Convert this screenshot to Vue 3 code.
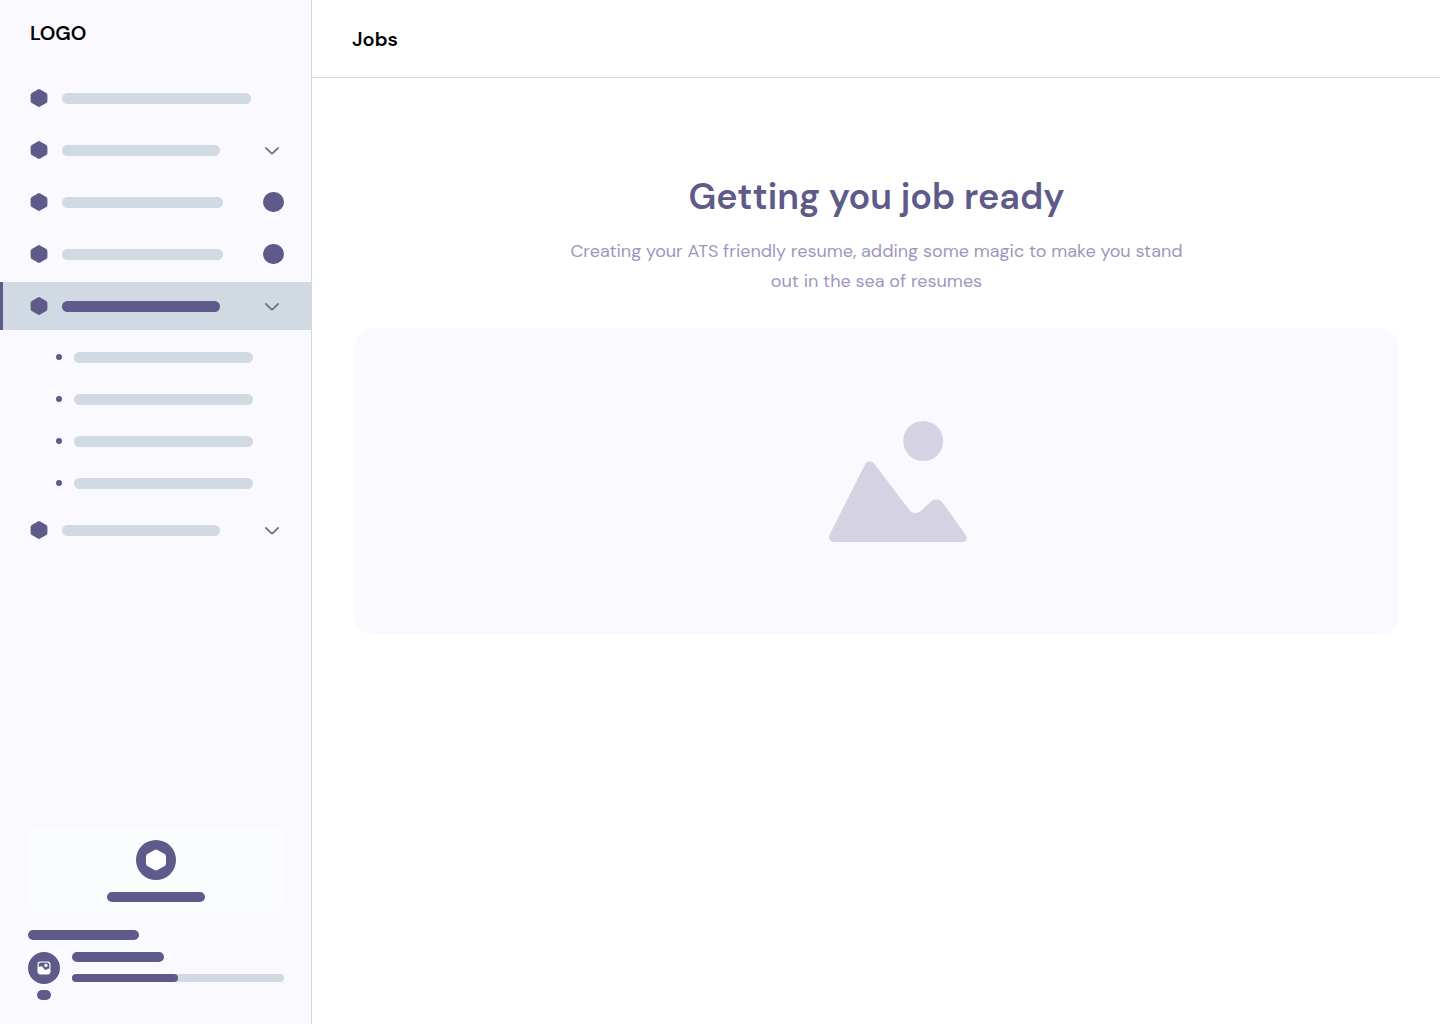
<script setup>
const menu = [
  { id: 1, bar: 'long' },
  { id: 2, bar: 'short', chevron: true },
  { id: 3, bar: 'medium', badge: true },
  { id: 4, bar: 'medium', badge: true },
  { id: 5, bar: 'short', chevron: true, active: true, children: [1, 2, 3, 4] },
  { id: 6, bar: 'short', chevron: true },
]
</script>

<template>
  <div class="app">
    <aside class="sidebar">
      <div class="logo">LOGO</div>

      <nav class="menu" aria-label="Main">
        <template v-for="item in menu" :key="item.id">
          <a
            href="#"
            class="item"
            :class="{ active: item.active }"
            :aria-label="`Menu item ${item.id}`"
          >
            <svg class="hexagon" viewBox="0 0 18 18" aria-hidden="true">
              <path d="M7.800 .4Q9-.3 10.200 .4L16.200 3.900Q17.400 4.600 17.400 6V12Q17.400 13.400 16.200 14.100L10.200 17.600Q9 18.300 7.800 17.600L1.800 14.100Q.6 13.400 .6 12V6Q.6 4.600 1.800 3.900Z" />
            </svg>
            <span class="bar" :class="item.bar"></span>
            <svg v-if="item.chevron" class="chevron" viewBox="0 0 24 24" aria-hidden="true">
              <path d="M5.800 9.800L11.300 15.200Q12 15.900 12.700 15.200L18.200 9.800" />
            </svg>
            <span v-if="item.badge" class="badge"></span>
          </a>
          <div v-if="item.children" class="submenu">
            <a
              v-for="child in item.children"
              :key="child"
              href="#"
              class="subitem"
              :aria-label="`Submenu item ${child}`"
            >
              <span class="dot"></span>
              <span class="bar sub"></span>
            </a>
          </div>
        </template>
      </nav>

      <footer class="foot">
        <button type="button" class="card" aria-label="Action">
          <span class="disc">
            <svg viewBox="0 0 20 22" width="20" height="22" aria-hidden="true">
              <path fill="#fff" d="M8.600 .9Q10 0 11.400 .9L18.600 5Q20 5.800 20 7.400V14.600Q20 16.200 18.600 17L11.400 21.100Q10 22 8.600 21.100L1.400 17Q0 16.200 0 14.600V7.400Q0 5.800 1.400 5Z" />
            </svg>
          </span>
          <span class="line card-line"></span>
        </button>
        <span class="line section-line"></span>
        <div class="profile">
          <div class="avatar-col">
            <span class="avatar">
              <svg viewBox="0 0 14 14" width="14" height="14" aria-hidden="true">
                <rect x=".5" y=".5" width="13" height="13" rx="3" fill="#fff" />
                <path fill="#5e5a89" d="M1.600 4.400Q1.600 1.600 4.400 1.600H9.600Q12.400 1.600 12.400 4.400V7.900L11.200 7.500Q9.500 9.200 8 8.900L5.600 5.900Q4.500 4.800 3.300 5.400L1.600 5.800Z" />
                <circle cx="8.900" cy="4.400" r="1.700" fill="#fff" />
              </svg>
            </span>
            <span class="line chip"></span>
          </div>
          <div class="details">
            <span class="line name-line"></span>
            <progress value="50" max="100" aria-label="Progress"></progress>
          </div>
        </div>
      </footer>
    </aside>

    <main class="main">
      <header class="topbar">
        <h1>Jobs</h1>
      </header>
      <section class="content">
        <h2>Getting you job ready</h2>
        <p>
          Creating your ATS friendly resume, adding some magic to make you stand
          <br />out in the sea of resumes
        </p>
        <div class="panel">
          <svg viewBox="0 0 182 123" width="182" height="123" aria-hidden="true">
            <circle cx="137.200" cy="21" r="20" />
            <path d="M43.700 114.500L78.500 45.500C81 40.300 85.300 40 88.500 44L121.500 87.500C126 94.500 131.500 94.500 136.500 89.500L145 81.500C149 78 153 78.500 156.500 82.500L180 115.500C182 119 180 122 176 122H48.500C44 122 41.800 118.500 43.700 114.500Z" />
          </svg>
        </div>
      </section>
    </main>
  </div>
</template>

<style>
body {
  margin: 0;
}
</style>

<style scoped>
.app {
  display: flex;
  min-height: 100vh;
  font-family: "DM Sans", Inter, sans-serif;
  background: #fff;
}

.sidebar {
  flex: 0 0 312px;
  box-sizing: border-box;
  display: flex;
  flex-direction: column;
  background: #faf9ff;
  border-right: 1px solid #d1d9e2;
}

.logo {
  padding: 20px 30px;
  height: 26px;
  margin-bottom: 8px;
  font-size: 20px;
  line-height: 26px;
  font-weight: 600;
  color: #000;
}

.menu {
  display: flex;
  flex-direction: column;
  gap: 4px;
}

.item {
  display: flex;
  align-items: center;
  height: 48px;
  box-sizing: border-box;
  padding: 0 27px;
  border-left: 3px solid transparent;
}

.item.active {
  background: #d1d9e2;
  border-left-color: #5e5a89;
}

.hexagon {
  width: 18px;
  height: 18px;
  margin-right: 14px;
  fill: #5e5a89;
}

.bar {
  height: 11px;
  border-radius: 6px;
  background: #d1d9e2;
}

.active .bar {
  background: #5e5a89;
}

.long {
  width: 189px;
}

.medium {
  width: 161px;
}

.short {
  width: 158px;
}

.sub {
  width: 179px;
}

.chevron {
  width: 24px;
  height: 24px;
  margin-left: auto;
  fill: none;
  stroke: #667085;
  stroke-width: 1.700;
  stroke-linecap: round;
}

.badge {
  width: 21px;
  height: 20px;
  margin-left: auto;
  border-radius: 10px;
  background: #5e5a89;
}

.submenu {
  display: flex;
  flex-direction: column;
  gap: 4px;
  padding-top: 4px;
}

.subitem {
  display: flex;
  align-items: center;
  gap: 12px;
  height: 38px;
  padding-left: 56px;
}

.dot {
  width: 6px;
  height: 6px;
  border-radius: 50%;
  background: #5e5a89;
}

.foot {
  display: flex;
  flex-direction: column;
  margin-top: auto;
  padding: 24px 27px 24px 28px;
}

.card {
  display: flex;
  flex-direction: column;
  align-items: center;
  gap: 12px;
  padding: 12px;
  margin-bottom: 16px;
  border: 0;
  border-radius: 12px;
  background: #fbfcfe;
}

.disc,
.avatar {
  display: flex;
  align-items: center;
  justify-content: center;
  border-radius: 50%;
  background: #5e5a89;
}

.disc {
  width: 40px;
  height: 40px;
}

.avatar {
  width: 32px;
  height: 32px;
}

.line {
  height: 10px;
  border-radius: 5px;
  background: #5e5a89;
}

.card-line {
  width: 98px;
}

.section-line {
  width: 111px;
  margin-bottom: 12px;
}

.profile {
  display: flex;
  gap: 12px;
}

.avatar-col {
  display: flex;
  flex-direction: column;
  align-items: center;
  gap: 6px;
}

.chip {
  width: 14px;
}

.details {
  flex: 1;
  display: flex;
  flex-direction: column;
  gap: 12px;
}

.name-line {
  width: 92px;
}

progress {
  appearance: none;
  display: block;
  width: 100%;
  height: 8px;
  border: 0;
  border-radius: 4px;
  overflow: hidden;
  background: #d1d9e2;
}

progress::-webkit-progress-bar {
  background: #d1d9e2;
}

progress::-webkit-progress-value {
  border-radius: 0 4px 4px 0;
  background: #5e5a89;
}

.main {
  flex: 1;
  min-width: 0;
}

.topbar {
  display: flex;
  align-items: center;
  height: 77px;
  padding: 0 40px;
  border-bottom: 1px solid #d1d9e2;
}

h1 {
  margin: 0;
  font-size: 20px;
  line-height: 28px;
  font-weight: 600;
  color: #000;
}

.content {
  padding: 96px 41px 40px 42px;
  text-align: center;
}

h2 {
  margin: 0 0 16px;
  font-size: 36px;
  line-height: 46px;
  font-weight: 600;
  color: #5e5a89;
}

p {
  margin: 0 0 32px;
  font-size: 18px;
  line-height: 30px;
  font-weight: 400;
  color: #9d97bf;
}

.panel {
  display: flex;
  align-items: center;
  justify-content: center;
  padding: 92px 0;
  border-radius: 20px;
  background: #faf9ff;
  fill: #d5d2e3;
}
</style>
